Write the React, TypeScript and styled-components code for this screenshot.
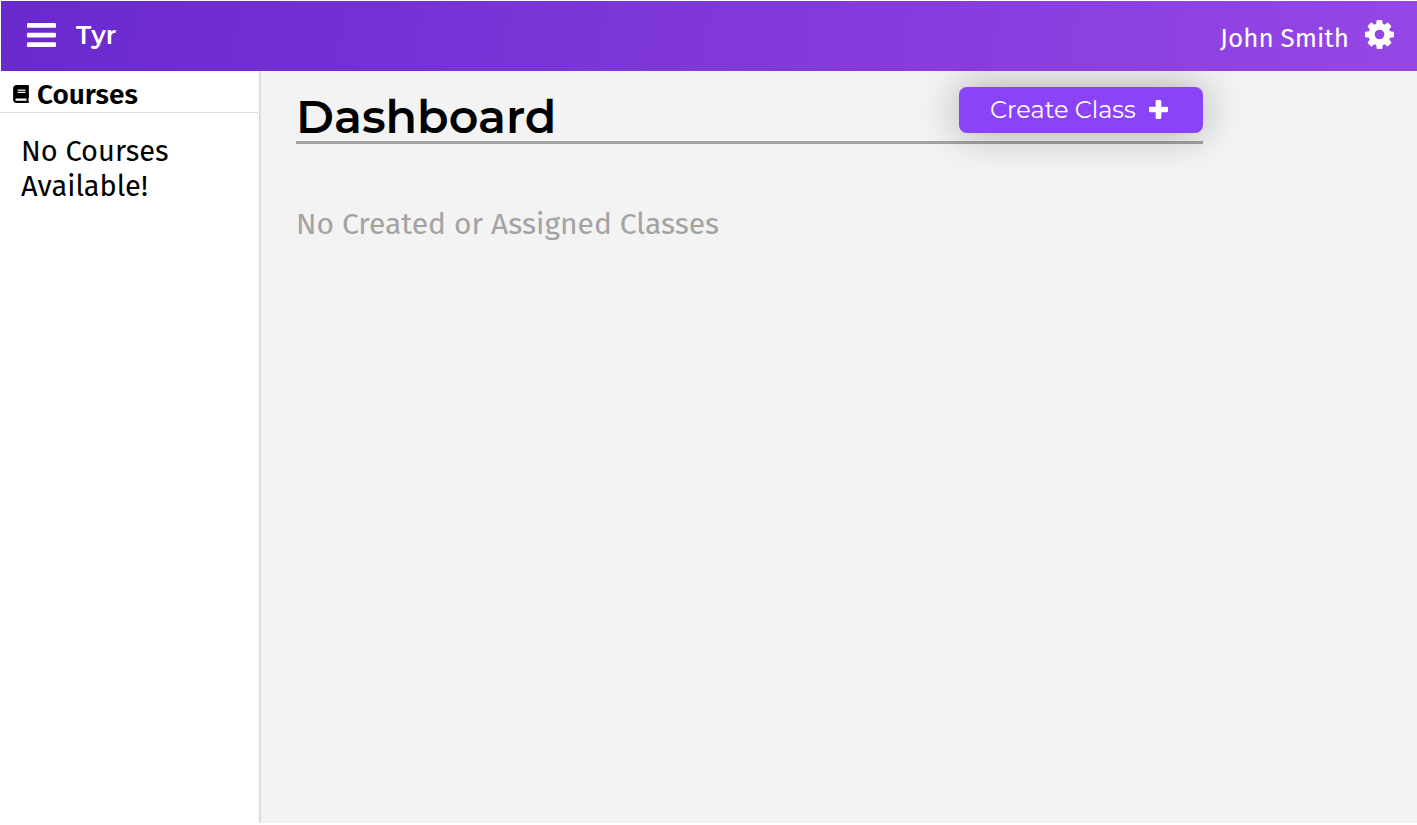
import React from 'react';
import styled, { createGlobalStyle } from 'styled-components';
import { FaBook } from 'react-icons/fa';

const GlobalStyle = createGlobalStyle`
  *, *::before, *::after { box-sizing: border-box; }
  body { margin: 0; background: #fff; font-family: 'Fira Sans', 'Noto Sans', sans-serif; color: #000; }
  h1, h2, p { margin: 0; }
`;

const Page = styled.div`
  display: flex;
  flex-direction: column;
  height: 825px;
  padding: 1px 0 2px;
  overflow: hidden;
`;

const Header = styled.header`
  position: relative;
  z-index: 1;
  flex: none;
  display: flex;
  align-items: center;
  height: 70px;
  margin-left: 1px;
  padding: 0 23px 2px 26px;
  background: linear-gradient(98deg, #6a28cd, #9547e6);
  color: #fff;
`;

const Brand = styled.span`
  margin-left: 20px;
  font: 600 25.3px/40px 'Montserrat', 'Inter', sans-serif;
`;

const UserName = styled.span`
  margin: 7px 16px 0 auto;
  font-size: 26px;
  line-height: 36px;
`;

const Body = styled.div`
  flex: 1;
  display: flex;
  min-height: 0;
`;

const Sidebar = styled.aside`
  position: relative;
  flex: none;
  width: 259px;
  background: #fff;
  box-shadow: 1px 0 2px rgba(0, 0, 0, 0.18);
  clip-path: inset(0 -6px 0 0);
`;

const SidebarTitle = styled.h2`
  display: flex;
  align-items: center;
  gap: 7px;
  width: 258px;
  height: 42px;
  padding: 5px 0 0 12px;
  border-bottom: 1px solid #dcdcdc;
  font-size: 28px;
  line-height: 36px;
  font-weight: 600;
`;

const SidebarLabel = styled.span`
  padding-top: 1px;
`;

const EmptyCourses = styled.p`
  width: 220px;
  padding: 21px 0 0 21px;
  font-size: 29px;
  line-height: 35px;
`;

const Main = styled.main`
  flex: 1;
  padding: 16px 214px 0 37px;
  background: #f3f3f3;
`;

const TitleRow = styled.div`
  display: flex;
  justify-content: space-between;
  align-items: flex-start;
  height: 57px;
  border-bottom: 3px solid #a5a2a2;
`;

const Title = styled.h1`
  font: 600 46px/59px 'Montserrat', 'Inter', sans-serif;
`;

const CreateButton = styled.button`
  display: flex;
  align-items: center;
  width: 244px;
  height: 46px;
  padding: 0 35px 0 31px;
  justify-content: space-between;
  border: 0;
  border-radius: 8px;
  background: #8a43f7;
  box-shadow: 0 0 40px rgba(0, 0, 0, 0.3);
  color: #fff;
  font: 400 24px/46px 'Montserrat', 'Inter', sans-serif;
  white-space: nowrap;

  svg { margin-bottom: 2px; }
`;

const EmptyClasses = styled.p`
  margin-top: 60px;
  color: #a5a2a2;
  font-size: 30px;
  line-height: 40px;
`;

const CogSvg = styled.svg`
  margin-bottom: 1px;
`;

const BarsIcon = () => (
  <svg width="29" height="24.2" viewBox="0 0 1536 1280" fill="currentColor">
    {[0, 512, 1024].map((y) => (
      <rect key={y} y={y} width="1536" height="256" rx="64" />
    ))}
  </svg>
);

const CogIcon = () => (
  <CogSvg width="29" height="29" viewBox="128 128 1536 1536" fill="currentColor">
    <path d="M1152 896q0-106-75-181t-181-75-181 75-75 181 75 181 181 75 181-75 75-181zm512-109v222q0 12-8 23t-20 13l-185 28q-19 54-39 91 35 50 107 138 10 12 10 25t-9 23q-27 37-99 108t-94 71q-12 0-26-9l-138-108q-44 23-91 38-16 136-29 186-7 28-36 28h-222q-14 0-24.5-8.5t-11.5-21.5l-28-184q-49-16-90-37l-141 107q-10 9-25 9-14 0-25-11-126-114-165-168-7-10-7-23 0-12 8-23 15-21 51-66.5t54-70.5q-27-50-41-99l-183-27q-13-2-21-12.5t-8-23.5v-222q0-12 8-23t19-13l186-28q14-46 39-92-40-57-107-138-10-12-10-24 0-10 9-23 26-36 98.5-107.5t94.5-71.5q13 0 26 10l138 107q44-23 91-38 16-136 29-186 7-28 36-28h222q14 0 24.5 8.5t11.5 21.5l28 184q49 16 90 37l142-107q9-9 24-9 13 0 25 10 129 119 165 170 7 8 7 22 0 12-8 23-15 21-51 66.5t-54 70.5q26 50 41 98l183 28q13 2 21 12.5t8 23.5z" />
  </CogSvg>
);

const PlusIcon = () => (
  <svg width="19" height="19" viewBox="0 0 1408 1408" fill="currentColor">
    <rect x="496" width="416" height="1408" rx="96" />
    <rect y="496" width="1408" height="416" rx="96" />
  </svg>
);

export default function App() {
  return (
    <>
      <GlobalStyle />
      <Page>
        <Header>
          <BarsIcon />
          <Brand>Tyr</Brand>
          <UserName>John Smith</UserName>
          <CogIcon />
        </Header>
        <Body>
          <Sidebar>
            <SidebarTitle>
              <FaBook size={18} />
              <SidebarLabel>Courses</SidebarLabel>
            </SidebarTitle>
            <EmptyCourses>No Courses Available!</EmptyCourses>
          </Sidebar>
          <Main>
            <TitleRow>
              <Title>Dashboard</Title>
              <CreateButton type="button">
                Create Class
                <PlusIcon />
              </CreateButton>
            </TitleRow>
            <EmptyClasses>No Created or Assigned Classes</EmptyClasses>
          </Main>
        </Body>
      </Page>
    </>
  );
}
